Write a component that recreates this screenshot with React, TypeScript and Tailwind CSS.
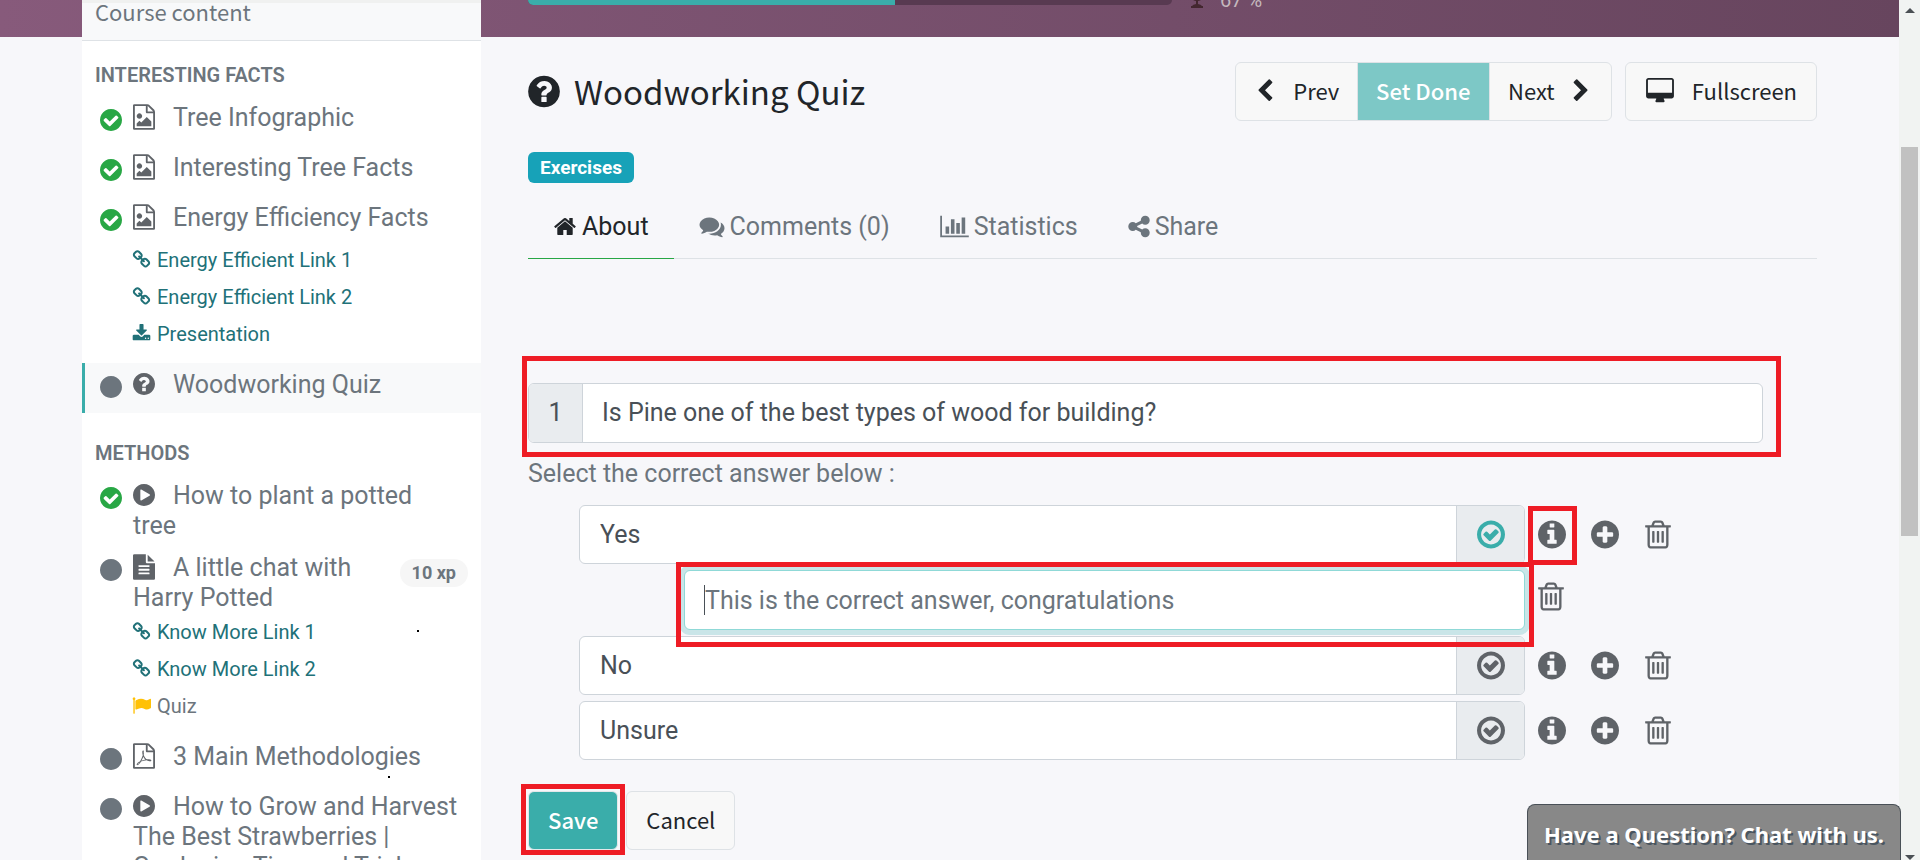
import type { ReactNode } from "react";

const DISC =
  "q0 209-103 385.5t-279.5 279.5-385.5 103-385.5-103-279.5-279.5-103-385.5 103-385.5 279.5-279.5 385.5-103 385.5 103 279.5 279.5 103 385.5z";
const SHEET =
  "M1596 380q28 28 48 76t20 88v1152q0 40-28 68t-68 28h-1344q-40 0-68-28t-28-68v-1600q0-40 28-68t68-28h896q40 0 88 20t76 48zm-444-244v376h376q-10-29-22-41l-313-313q-12-12-41-22zm384 1528v-1024h-416q-40 0-68-28t-28-68v-416h-768v1536h1280z";
const SLOT = "v576q0 14-9 23t-23 9h-64q-14 0-23-9t-9-23v-576q0-14 9-23t23-9h64q14 0 23 9t9 23z";
const LINE = "v-64q0-14-9-23t-23-9h-704q-14 0-23 9t-9 23v64q0 14 9 23t23 9h704q14 0 23-9t9-23z";

const glyphs = {
  home: "M1472 992v480q0 26-19 45t-45 19h-384v-384h-256v384h-384q-26 0-45-19t-19-45v-480q0-1 .5-3t.5-3l575-474 575 474q1 2 1 6zm223-69l-62 74q-8 9-21 11h-3q-13 0-21-7l-692-577-692 577q-12 8-24 7-13-2-21-11l-62-74q-8-10-7-23.5t11-21.5l719-599q32-26 76-26t76 26l244 204v-195q0-14 9-23t23-9h192q14 0 23 9t9 23v408l219 182q10 8 11 21.5t-7 23.5z",
  question:
    "M1024 1376v-192q0-14-9-23t-23-9h-192q-14 0-23 9t-9 23v192q0 14 9 23t23 9h192q14 0 23-9t9-23zm256-672q0-88-55.5-163t-138.5-116-170-41q-243 0-371 213-15 24 8 42l132 100q7 6 19 6 16 0 25-12 53-68 86-92 34-24 86-24 48 0 85.5 26t37.5 59q0 38-20 61t-68 45q-63 28-115.5 86.5t-52.5 125.5v36q0 14 9 23t23 9h192q14 0 23-9t9-23q0-19 21.5-49.5t54.5-49.5q32-18 49-28.5t46-35 44.5-48 28-60.5 12.5-81zm384 192" + DISC,
  check:
    "M1412 734q0-28-18-46l-91-90q-19-19-45-19t-45 19l-408 407-226-226q-19-19-45-19t-45 19l-91 90q-18 18-18 46 0 27 18 45l362 362q19 19 45 19 27 0 46-19l543-543q18-18 18-45zm252 162" + DISC,
  disc: "M1664 896" + DISC,
  info:
    "M1152 1376v-160q0-14-9-23t-23-9h-96v-512q0-14-9-23t-23-9h-320q-14 0-23 9t-9 23v160q0 14 9 23t23 9h96v320h-96q-14 0-23 9t-9 23v160q0 14 9 23t23 9h448q14 0 23-9t9-23zm-128-896v-160q0-14-9-23t-23-9h-192q-14 0-23 9t-9 23v160q0 14 9 23t23 9h192q14 0 23-9t9-23zm640 416" + DISC,
  plus:
    "M1344 960v-128q0-26-19-45t-45-19h-256v-256q0-26-19-45t-45-19h-128q-26 0-45 19t-19 45v256h-256q-26 0-45 19t-19 45v128q0 26 19 45t45 19h256v256q0 26 19 45t45 19h128q26 0 45-19t19-45v-256h256q26 0 45-19t19-45zm320-64" + DISC,
  play:
    "M896 128q209 0 385.5 103t279.5 279.5 103 385.5-103 385.5-279.5 279.5-385.5 103-385.5-103-279.5-279.5-103-385.5 103-385.5 279.5-279.5 385.5-103zm384 823q32-18 32-55t-32-55l-544-320q-31-19-64-1-32 19-32 56v640q0 37 32 56 16 8 32 8 17 0 32-9z",
  checkRing:
    "M1299 813l-422 422q-19 19-45 19t-45-19l-294-294q-19-19-19-45t19-45l102-102q19-19 45-19t45 19l147 147 275-275q19-19 45-19t45 19l102 102q19 19 19 45t-19 45zm141 83q0-148-73-273t-198-198-273-73-273 73-198 198-73 273 73 273 198 198 273 73 273-73 198-198 73-273zm224 0" + DISC,
  trash:
    "M704 736" + SLOT + "M960 736" + SLOT + "M1216 736" + SLOT +
    "M1344 1460v-948h-896v948q0 22 7 40.5t14.5 27 10.5 8.5h832q3 0 10.5-8.5t14.5-27 7-40.5zm-672-1076h448l-48-117q-7-9-17-11h-317q-10 2-17 11zm928 32v64q0 14-9 23t-23 9h-96v948q0 83-47 143.5t-113 60.5h-832q-66 0-113-58.5t-47-141.5v-952h-96q-14 0-23-9t-9-23v-64q0-14 9-23t23-9h309l70-167q15-37 54-63t79-26h320q40 0 79 26t54 63l70 167h309q14 0 23 9t9 23z",
  image: SHEET + "m-128-448v320h-1024v-192l192-192 128 128 384-384zm-832-192q-80 0-136-56t-56-136 56-136 136-56 136 56 56 136-56 136-136 56z",
  pdf:
    SHEET +
    "m-514-593q33 26 84 56 59-7 117-7 147 0 177 49 16 22 2 52 0 1-1 2l-2 2v1q-6 38-71 38-48 0-115-20t-130-53q-221 24-392 83-153 262-242 262-15 0-28-7l-24-12q-1-1-6-5-10-10-6-36 9-40 56-91.5t132-96.5q14-9 23 6 2 2 2 4 52-85 107-197 68-136 104-262-24-82-30.5-159.5t6.5-127.5q11-40 42-40h22q23 0 35 15 18 21 9 68-2 6-4 8 1 3 1 8v30q-2 123-14 192 55 164 146 238zm-576 411q52-24 137-158-51 40-87.5 84t-49.5 74zm398-920q-15 42-2 132 1-7 7-44 0-3 7-43 1-4 4-8-1-1-1-2-1-2-1-3-1-22-13-36 0 1-1 2v2zm-124 661q135-54 284-81-2-1-13-9.5t-16-13.5q-76-67-127-176-27 86-83 197-30 56-45 83zm646-16q-24-24-140-24 76 28 124 28 14 0 18-1 0-1-2-3z",
  text:
    "M1596 476q14 14 28 36h-472v-472q22 14 36 28zm-476 164h544v1056q0 40-28 68t-68 28h-1344q-40 0-68-28t-28-68v-1600q0-40 28-68t68-28h800v544q0 40 28 68t68 28z" +
    "M1280 1376" + LINE + "M1280 1120" + LINE + "M1280 864" + LINE,
  link: "M1520 1216q0-40-28-68l-208-208q-28-28-68-28-42 0-72 32 3 3 19 18.5t21.5 21.5 15 19 13 25.5 3.5 27.5q0 40-28 68t-68 28q-15 0-27.5-3.5t-25.5-13-19-15-21.5-21.5-18.5-19q-33 31-33 73 0 40 28 68l206 207q27 27 68 27 40 0 68-26l147-146q28-28 28-67zm-703-705q0-40-28-68l-206-207q-28-28-68-28-39 0-68 27l-147 146q-28 28-28 67 0 40 28 68l208 208q27 27 68 27 42 0 72-31-3-3-19-18.5t-21.5-21.5-15-19-13-25.5-3.5-27.5q0-40 28-68t68-28q15 0 27.5 3.5t25.5 13 19 15 21.5 21.5 18.5 19q33-31 33-73zm895 705q0 120-85 203l-147 146q-83 83-203 83-121 0-204-85l-206-207q-83-83-83-203 0-123 88-209l-88-88q-86 88-208 88-120 0-204-84l-208-208q-84-84-84-204t85-203l147-146q83-83 203-83 121 0 204 85l206 207q83 83 83 203 0 123-88 209l88 88q86-88 208-88 120 0 204 84l208 208q84 84 84 204z",
  download:
    "M1344 1344q0-26-19-45t-45-19-45 19-19 45 19 45 45 19 45-19 19-45zm256 0q0-26-19-45t-45-19-45 19-19 45 19 45 45 19 45-19 19-45zm128-224v320q0 40-28 68t-68 28h-1472q-40 0-68-28t-28-68v-320q0-40 28-68t68-28h465l135 136q58 56 136 56t136-56l136-136h464q40 0 68 28t28 68zm-325-569q17 41-14 70l-448 448q-18 19-45 19t-45-19l-448-448q-31-29-14-70 17-39 59-39h256v-448q0-26 19-45t45-19h256q26 0 45 19t19 45v448h256q42 0 59 39z",
  flag: "M320 256q0 72-64 110v1266q0 13-9.5 22.5t-22.5 9.5h-64q-13 0-22.5-9.5t-9.5-22.5v-1266q-64-38-64-110 0-53 37.5-90.5t90.5-37.5 90.5 37.5 37.5 90.5zm1472 64v763q0 25-12.5 38.5t-39.5 27.5q-215 116-369 116-61 0-123.5-22t-108.5-48-115.5-48-142.5-22q-192 0-464 146-17 9-33 9-26 0-45-19t-19-45v-742q0-32 31-55 21-14 79-43 236-120 421-120 107 0 200 29t219 88q38 19 88 19 54 0 117.5-21t110-47 88-47 54.5-21q26 0 45 19t19 45z",
  comments:
    "M1408 768q0 139-94 257t-256.5 186.5-353.5 68.5q-86 0-176-16-124 88-278 128-36 9-86 16h-3q-11 0-20.5-8t-11.5-21q-1-3-1-6.5t.5-6.5 2-6l2.500-5 3.500-5.500 4-5 4.500-5 4-4.500q5-6 23-25t26-29.500 22.500-29 25-38.500 20.500-44q-124-72-195-177t-71-224q0-139 94-257t256.500-186.500 353.500-68.500 353.500 68.500 256.500 186.500 94 257zm384 256q0 120-71 224.500t-195 176.500q10 24 20.500 44t25 38.500 22.500 29 26 29.500 23 25q1 1 4 4.500t4.500 5 4 5 3.500 5.500l2.500 5 2 6 .5 6.500-1 6.500q-3 14-13 22t-22 7q-50-7-86-16-154-40-278-128-90 16-176 16-271 0-472-132 58 4 88 4 161 0 309-45t264-129q125-92 192-212t67-254q0-77-23-152 129 71 204 178t75 230z",
  chart:
    "M640 896v512h-256v-512h256zm384-512v1024h-256v-1024h256zm1024 1152v128h-2048v-1536h128v1408h1920zm-640-896v768h-256v-768h256zm384-384v1152h-256v-1152h256z",
  share:
    "M1344 1024q133 0 226.5 93.5t93.5 226.5-93.5 226.5-226.5 93.5-226.5-93.5-93.5-226.5q0-12 2-34l-360-180q-92 86-218 86-133 0-226.5-93.5t-93.5-226.5 93.5-226.5 226.5-93.5q126 0 218 86l360-180q-2-22-2-34 0-133 93.5-226.5t226.5-93.5 226.5 93.5 93.5 226.5-93.5 226.5-226.5 93.5q-126 0-218-86l-360 180q2 22 2 34t-2 34l360 180q92-86 218-86z",
  desktop:
    "M1856 992v-832q0-13-9.5-22.5t-22.5-9.5h-1600q-13 0-22.5 9.5t-9.5 22.5v832q0 13 9.5 22.5t22.5 9.5h1600q13 0 22.5-9.5t9.5-22.5zm128-832v1088q0 66-47 113t-113 47h-544q0 37 16 77.5t32 71 16 43.5q0 26-19 45t-45 19h-512q-26 0-45-19t-19-45q0-14 16-44t32-70 16-78h-544q-66 0-113-47t-47-113v-1088q0-66 47-113t113-47h1600q66 0 113 47t47 113z",
  left: "M1427 301l-531 531 531 531q19 19 19 45t-19 45l-166 166q-19 19-45 19t-45-19l-742-742q-19-19-19-45t19-45l742-742q19-19 45-19t45 19l166 166q19 19 19 45t-19 45z",
  right:
    "M1363 877l-742 742q-19 19-45 19t-45-19l-166-166q-19-19-19-45t19-45l531-531-531-531q-19-19-19-45t19-45l166-166q19-19 45-19t45 19l742 742q19 19 19 45t-19 45z",
};

type Glyph = keyof typeof glyphs;

const NARROW = "128 0 1536 1792";
const SQUARE = "0 0 1792 1792";
const WIDE = "0 0 2048 1792";

function Icon({ name, box = NARROW, className = "" }: { name: Glyph; box?: string; className?: string }) {
  return (
    <svg viewBox={box} fill="currentColor" aria-hidden="true" className={className}>
      <path d={glyphs[name]} />
    </svg>
  );
}

type SubLink = { icon: Glyph; label: string; tone?: "teal" | "quiz" };
type Lesson = { icon: Glyph; label: string; done?: boolean; active?: boolean; xp?: string; links?: SubLink[] };

const facts: Lesson[] = [
  { icon: "image", label: "Tree Infographic", done: true },
  { icon: "image", label: "Interesting Tree Facts", done: true },
  {
    icon: "image",
    label: "Energy Efficiency Facts",
    done: true,
    links: [
      { icon: "link", label: "Energy Efficient Link 1" },
      { icon: "link", label: "Energy Efficient Link 2" },
      { icon: "download", label: "Presentation" },
    ],
  },
  { icon: "question", label: "Woodworking Quiz", active: true },
];

const methods: Lesson[] = [
  { icon: "play", label: "How to plant a potted tree", done: true },
  {
    icon: "text",
    label: "A little chat with Harry Potted",
    xp: "10 xp",
    links: [
      { icon: "link", label: "Know More Link 1" },
      { icon: "link", label: "Know More Link 2" },
      { icon: "flag", label: "Quiz", tone: "quiz" },
    ],
  },
  { icon: "pdf", label: "3 Main Methodologies" },
  { icon: "play", label: "How to Grow and Harvest The Best Strawberries | Gardening Tips and Tricks" },
];

function LessonItem({ lesson }: { lesson: Lesson }) {
  return (
    <li>
      <div
        className={
          lesson.active
            ? "flex min-h-[50px] items-start border-l-[3px] border-[#3aadaa] bg-[#f8f9fa] pt-[7px] pb-[5px] pl-[15px]"
            : "flex min-h-[50px] items-start pt-[7px] pb-[5px] pl-[18px]"
        }
      >
        <Icon
          name={lesson.done ? "check" : "disc"}
          className={lesson.done ? "mt-[4px] h-[26px] w-[22px] shrink-0 text-[#28a745]" : "mt-[4px] h-[26px] w-[22px] shrink-0 text-[#6c757d]"}
        />
        <a
          href="#lesson"
          className={
            lesson.xp
              ? "ml-[11px] min-w-0 flex-1 text-[25px] leading-[30px] text-[#6c757d]"
              : "mr-[22px] ml-[11px] min-w-0 flex-1 text-[25px] leading-[30px] text-[#6c757d]"
          }
        >
          <Icon name={lesson.icon} className="mr-[18px] inline-block h-[26px] w-[22px] align-[-4px] text-[#5f6368]" />
          {lesson.label}
        </a>
        {lesson.xp && (
          <span className="mt-[6px] mr-[13px] shrink-0 rounded-full bg-[#f6f6f6] px-3 text-[18px] leading-[28px] font-bold text-[#6c757d]">
            {lesson.xp}
          </span>
        )}
      </div>
      {lesson.links && (
        <ul className="-mt-[5px] pb-[11px] pl-[50px]">
          {lesson.links.map((l) => (
            <li key={l.label}>
              <a
                href="#resource"
                className={
                  l.tone === "quiz"
                    ? "flex h-[37px] items-center gap-[6px] text-[20px] text-[#6c757d]"
                    : "flex h-[37px] items-center gap-[6px] text-[20px] text-[#217178]"
                }
              >
                <Icon
                  name={l.icon}
                  box={SQUARE}
                  className={l.tone === "quiz" ? "h-[19px] w-[19px] text-[#ffc107]" : "h-[19px] w-[19px]"}
                />
                {l.label}
              </a>
            </li>
          ))}
        </ul>
      )}
    </li>
  );
}

function Section({ title, lessons }: { title: string; lessons: Lesson[] }) {
  return (
    <section className="pb-[6px]">
      <h2 className="pt-[21px] pl-[13px] text-[20px] leading-[26px] font-semibold text-[#6c757d]">{title}</h2>
      <ul className="pt-[8px]">
        {lessons.map((l) => (
          <LessonItem key={l.label} lesson={l} />
        ))}
      </ul>
    </section>
  );
}

function Mark({ className }: { className: string }) {
  return <span aria-hidden="true" className={"pointer-events-none absolute z-10 border-5 border-[#ee1c25] " + className} />;
}

function IconButton({ name, label }: { name: Glyph; label: string }) {
  return (
    <button type="button" aria-label={label} className="relative flex w-[28px] justify-center text-[#5f6368]">
      <Icon name={name} className="h-[33px] w-[28px]" />
    </button>
  );
}

function AnswerRow({ value, correct, marked }: { value: string; correct?: boolean; marked?: boolean }) {
  return (
    <div className="flex items-center pl-[51px]">
      <div className="flex h-[59px] w-[946px] rounded-[6px] border border-[#ced4da] bg-white">
        <input
          aria-label="Answer"
          defaultValue={value}
          className="min-w-0 flex-1 rounded-l-[6px] pl-[20px] text-[25px] text-[#495057] outline-none"
        />
        <button
          type="button"
          aria-label="Correct answer"
          className={
            correct
              ? "flex w-[68px] items-center justify-center rounded-r-[5px] border-l border-[#ced4da] bg-[#e9ecef] text-[#3aadaa]"
              : "flex w-[68px] items-center justify-center rounded-r-[5px] border-l border-[#ced4da] bg-[#e9ecef] text-[#5f6368]"
          }
        >
          <Icon name="checkRing" className="h-[33px] w-[28px]" />
        </button>
      </div>
      <div className="relative ml-[13px] flex gap-[25px]">
        <IconButton name="info" label="Add comment" />
        {marked && <Mark className="-top-[12px] -left-[10px] h-[59px] w-[49px]" />}
        <IconButton name="plus" label="Add answer" />
        <IconButton name="trash" label="Remove answer" />
      </div>
    </div>
  );
}

function Tab({ icon, box, width, active, children }: { icon: Glyph; box: string; width: string; active?: boolean; children: ReactNode }) {
  return (
    <a
      href="#tab"
      className={
        active
          ? "-mb-px flex h-[64px] items-center gap-[5px] border-b border-[#28a745] px-[25px] text-[#212529]"
          : "flex h-[63px] items-center gap-[5px] px-[25px] text-[#6c757d]"
      }
    >
      <Icon name={icon} box={box} className={"h-[25px] " + width} />
      {children}
    </a>
  );
}

const HEAD = "font-['Noto_Sans_CJK_JP',sans-serif]";

export default function App() {
  return (
    <div className="flex h-screen overflow-hidden bg-[#f7f7fa] font-[Roboto,sans-serif]">
      <div className="relative min-w-0 flex-1">
        <div className="h-[37px] bg-linear-to-r from-[#875a7b] to-[#67455e]" />
        <div className="-mt-[37px] flex gap-[47px] px-[82px]">
          <aside className="relative h-screen w-[399px] shrink-0 overflow-hidden bg-white">
            <div className="h-[41px] border-b border-[#dee2e6] bg-[#f8f9fa] shadow-[inset_0_3px_0_#f0f1f0]">
              <h1 className={"pl-[13px] text-[22px] leading-[22px] text-[#6c757d] " + HEAD}>Course content</h1>
            </div>
            <Section title="INTERESTING FACTS" lessons={facts} />
            <Section title="METHODS" lessons={methods} />
            <span className="absolute top-[630px] left-[335px] size-[2px] bg-black" />
            <span className="absolute top-[776px] left-[306px] size-[2px] bg-black" />
          </aside>

          <main className="min-w-0 flex-1">
            <div className="flex h-[37px] items-start overflow-hidden">
              <div className="flex h-[5px] w-[644px] overflow-hidden rounded-b-[5px] bg-[#583a51]">
                <div className="w-[57%] bg-[#3aadaa]" />
              </div>
              <svg viewBox="0 0 14 8" fill="#43272f" aria-hidden="true" className="ml-[18px] h-[8px] w-[14px]">
                <path d="M3 0h8q-2 1-3 1v3q3 .3 4 2h1v2H1V6h1q1-1.700 4-2V1Q5 1 3 0z" />
              </svg>
              <span className="-mt-[12px] ml-[16px] text-[20px] leading-[24px] text-[#c4b8bd]">67 %</span>
            </div>

            <div className="mt-[25px] flex items-center justify-between">
              <h2 className={"flex items-center gap-[14px] text-[33px] leading-[40px] text-[#212529] " + HEAD}>
                <Icon name="question" className="h-[37px] w-[32px]" />
                <span className="pb-[2px]">Woodworking Quiz</span>
              </h2>
              <div className={"flex gap-[13px] text-[22px] text-[#212529] " + HEAD}>
                <div className="flex h-[59px] overflow-hidden rounded-[6px] border border-[#dee2e6] bg-[#f8f8f8]">
                  <button type="button" className="flex w-[121px] items-center justify-center gap-[16px] pb-[2px]">
                    <Icon name="left" box={SQUARE} className="h-[24px] w-[24px]" />
                    Prev
                  </button>
                  <button type="button" className="w-[133px] border-x border-[#dee2e6] bg-[#7dc8c6] pb-[2px] font-medium text-white">
                    Set Done
                  </button>
                  <button type="button" className="flex w-[121px] items-center justify-center gap-[14px] pb-[2px]">
                    Next
                    <Icon name="right" box={SQUARE} className="h-[24px] w-[24px]" />
                  </button>
                </div>
                <button
                  type="button"
                  className="flex h-[59px] items-center gap-[17px] rounded-[6px] border border-[#dee2e6] bg-[#f8f8f8] px-[19px] pb-[2px]"
                >
                  <Icon name="desktop" box={WIDE} className="h-[26px] w-[30px]" />
                  Fullscreen
                </button>
              </div>
            </div>

            <div className="mt-[31px] flex">
              <span className="rounded-[6px] bg-[#17a2b8] px-[12px] text-[19px] leading-[31px] font-bold text-white">Exercises</span>
            </div>

            <nav className="mt-[12px] flex border-b border-[#dee2e6] text-[25px]">
              <Tab icon="home" box={SQUARE} width="w-[24px]" active>About</Tab>
              <Tab icon="comments" box={SQUARE} width="w-[26px]">Comments (0)</Tab>
              <Tab icon="chart" box={WIDE} width="w-[29px]">Statistics</Tab>
              <Tab icon="share" box={NARROW} width="w-[22px]">Share</Tab>
            </nav>

            <div className="relative mt-[124px] mr-[54px]">
              <Mark className="-top-[27px] -right-[18px] -bottom-[14px] -left-[6px]" />
              <div className="flex h-[60px] overflow-hidden rounded-[6px] border border-[#ced4da] bg-white text-[25px] text-[#495057]">
                <label htmlFor="question" className="flex w-[54px] items-center justify-center border-r border-[#ced4da] bg-[#e9ecef]">
                  1
                </label>
                <input
                  id="question"
                  defaultValue="Is Pine one of the best types of wood for building?"
                  className="min-w-0 flex-1 pl-[19px] outline-none"
                />
              </div>
            </div>

            <p className="mt-[16px] text-[25px] leading-[30px] text-[#6c757d]">Select the correct answer below :</p>

            <div className="mt-[16px] flex flex-col gap-[6px]">
              <AnswerRow value="Yes" correct marked />
              <div className="flex items-center pl-[156px]">
                <div className="relative w-[841px]">
                  <Mark className="-top-[8px] -right-[9px] -bottom-[17px] -left-[8px]" />
                  <input
                    aria-label="Comment"
                    placeholder="This is the correct answer, congratulations"
                    className="block h-[60px] w-full rounded-[6px] border border-[#8fd9d7] bg-white pl-[20px] text-[25px] text-[#495057] shadow-[0_0_0_5px_#c9e5e8] outline-none placeholder:text-[#6c757d]"
                  />
                  <span className="absolute top-[15px] left-[20px] h-[30px] w-px bg-[#495057]" />
                </div>
                <div className="-mt-[8px] ml-[12px] flex">
                  <IconButton name="trash" label="Remove comment" />
                </div>
              </div>
              <AnswerRow value="No" />
              <AnswerRow value="Unsure" />
            </div>

            <div className={"mt-[31px] flex gap-[8px] text-[22px] " + HEAD}>
              <div className="relative">
                <Mark className="-top-[7px] -right-[7px] -bottom-[5px] -left-[7px]" />
                <button type="button" className="h-[59px] rounded-[6px] border border-[#e4e8ea] bg-[#3aadaa] px-[19px] pb-[2px] font-medium text-white">
                  Save
                </button>
              </div>
              <button type="button" className="h-[59px] rounded-[6px] border border-[#dee2e6] bg-[#f8f8f8] px-[19px] pb-[2px] text-[#212529]">
                Cancel
              </button>
            </div>
          </main>
        </div>
      </div>

      <div aria-hidden="true" className="flex w-[21px] shrink-0 flex-col items-center bg-[#f1f3f2] pt-[8px]">
        <svg viewBox="0 0 10 5" className="h-[5px] w-[10px]" fill="#4a4f54">
          <path d="M5 0l5 5H0z" />
        </svg>
        <div className="mt-[134px] h-[389px] w-[17px] bg-[#c1c1c1]" />
        <div className="flex-1" />
        <svg viewBox="0 0 10 5" className="h-[5px] w-[10px]" fill="#4a4f54">
          <path d="M0 0h10L5 5z" />
        </svg>
      </div>

      <button
        type="button"
        className="absolute right-[19px] bottom-0 h-[56px] rounded-t-[8px] border border-b-0 border-[#495057] bg-[#888888] px-[16px] pt-1 font-['Noto_Sans',sans-serif] text-[22px] font-bold text-white [text-shadow:2px_2px_0_#495560]"
      >
        Have a Question? Chat with us.
      </button>
    </div>
  );
}
